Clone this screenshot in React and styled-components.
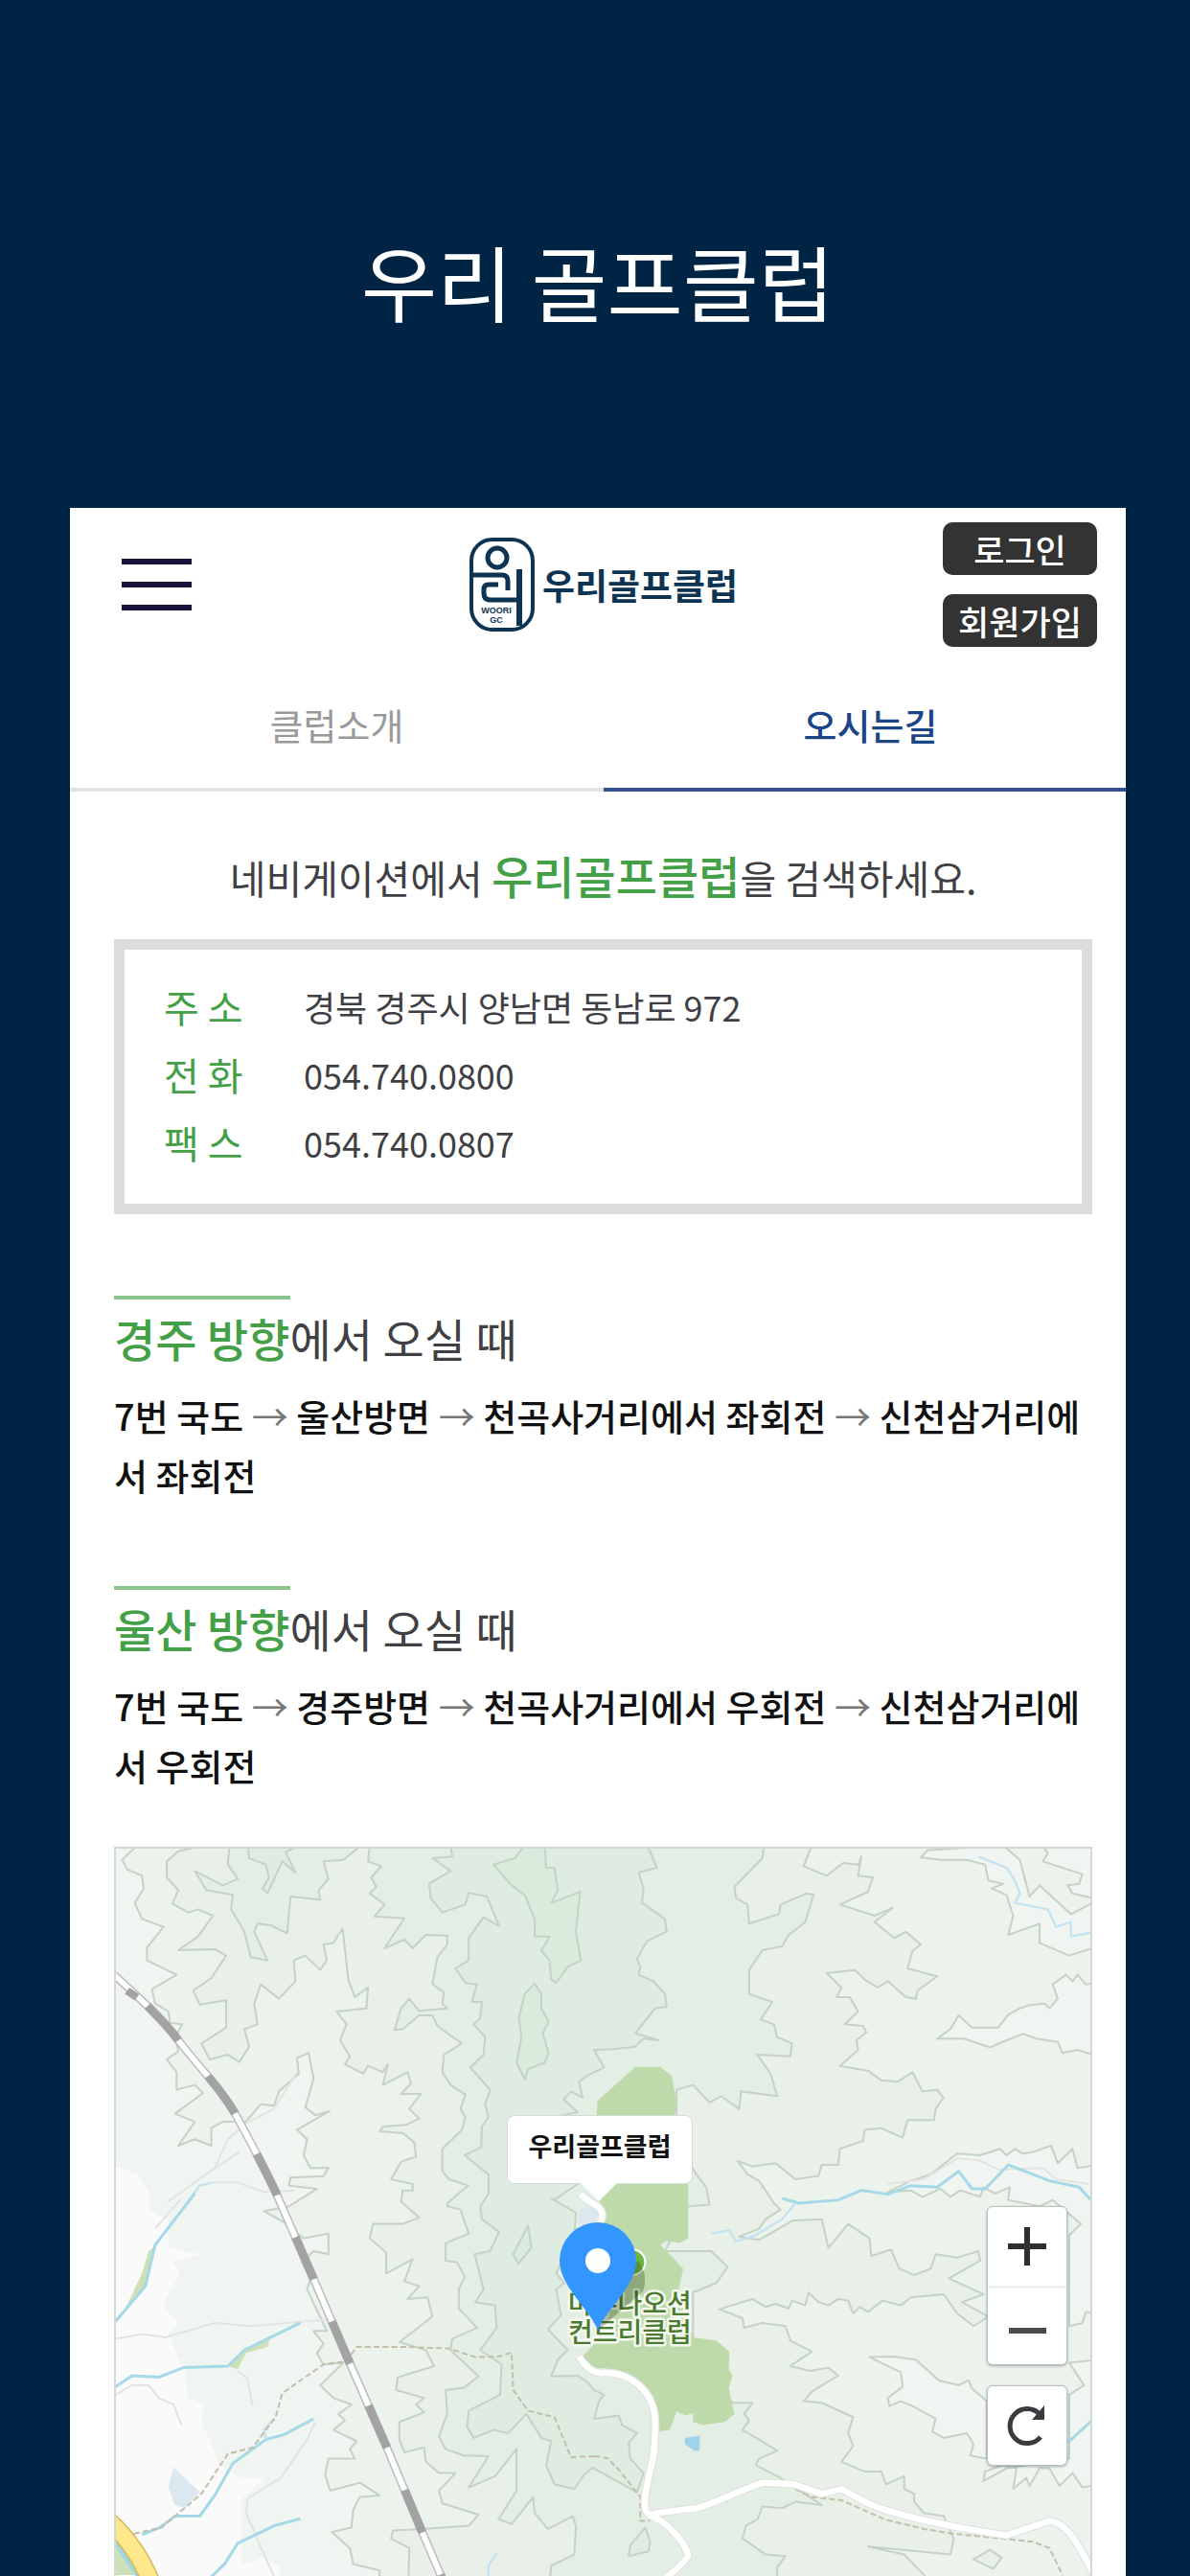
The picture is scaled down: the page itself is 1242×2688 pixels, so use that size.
import React from "react";
import styled, { createGlobalStyle, css } from "styled-components";

const color = {
  navy: "#002544",
  ink: "#3f3f44",
  green: "#43a047",
  rule: "#8bc48c",
  frame: "#dcdcdc",
  blue: "#1c4587",
};

const GlobalStyle = createGlobalStyle`
  *, *::before, *::after { box-sizing: border-box; }
  body { margin: 0; background: ${color.navy}; }
  body, button { font-family: "Noto Sans CJK KR", "Noto Sans", sans-serif; }
  h1, h2, p, dl, dd { margin: 0; }
`;

const Page = styled.div`
  min-height: 100vh;
  display: flex;
  flex-direction: column;
  padding: 0 67px 0 73px;
`;

const PageTitle = styled.h1`
  padding: 228px 0 172px;
  color: #fff;
  font-size: 86px;
  font-weight: 400;
  line-height: 130px;
  text-align: center;
`;

const Screen = styled.main`
  flex: 1;
  display: flex;
  overflow: hidden;
  background: #fff;
`;

/* The page inside the screen is slightly wider than its window. */
const Site = styled.div`
  flex: 0 0 calc(100% + 12px);
  display: flex;
  flex-direction: column;
`;

const Header = styled.header`
  display: grid;
  grid-template-columns: 1fr auto 1fr;
  padding: 15px 42px 0;
`;

const MenuButton = styled.button`
  justify-self: start;
  align-self: center;
  display: flex;
  flex-direction: column;
  gap: 18px;
  margin: 0 12px;
  padding: 0;
  border: 0;
  background: none;
`;

const MenuBar = styled.span`
  width: 73px;
  height: 6px;
  background: #1b1440;
`;

const Logo = styled.a`
  align-self: center;
  display: flex;
  align-items: center;
  gap: 8px;
  color: #0d3453;
  font-size: 37px;
  font-weight: 700;
  line-height: 48px;
  text-decoration: none;
`;

const Account = styled.div`
  justify-self: end;
  display: flex;
  flex-direction: column;
  gap: 20px;
`;

const AccountButton = styled.button`
  width: 161px;
  height: 55px;
  padding: 0;
  border: 0;
  border-radius: 10px;
  background: #333;
  color: #fff;
  font-size: 35px;
  font-weight: 500;
  line-height: 55px;
`;

const Tabs = styled.nav`
  display: flex;
  padding-top: 37px;
`;

const Tab = styled.a`
  flex: 1;
  padding: 16px 0 38px;
  border-bottom: 4px solid #e2e2e2;
  color: #999;
  font-size: 38px;
  line-height: 56px;
  text-align: center;
  text-decoration: none;
  ${(p) =>
    p.$active &&
    css`
      border-color: #33518f;
      color: ${color.blue};
      font-weight: 500;
    `}
`;

const Body = styled.div`
  flex: 1;
  display: flex;
  flex-direction: column;
  padding: 0 47px 0 46px;
`;

const SearchHint = styled.p`
  padding: 52px 0 30px;
  color: ${color.ink};
  font-size: 41px;
  line-height: 70px;
  text-align: center;
  white-space: nowrap;
`;

const Club = styled.strong`
  color: ${color.green};
  font-size: 47px;
  font-weight: 500;
`;

const Contact = styled.dl`
  display: grid;
  grid-template-columns: 146px 1fr;
  padding: 24px 41px 28px;
  border: 11px solid ${color.frame};
  color: ${color.ink};
  font-size: 36px;
  line-height: 71px;
`;

const Label = styled.dt`
  color: ${color.green};
  font-size: 40px;
`;

const Route = styled.section`
  padding-top: 85px;
`;

const RouteTitle = styled.h2`
  margin-bottom: 10px;
  color: ${color.ink};
  font-size: 47px;
  font-weight: 400;
  line-height: 76px;
`;

const Direction = styled.strong`
  display: inline-block;
  border-top: 4px solid ${color.rule};
  color: ${color.green};
  font-weight: 500;
  line-height: 80px;
`;

const RouteText = styled.p`
  color: #111;
  font-size: 38px;
  font-weight: 500;
  line-height: 62px;
  word-break: break-all;
`;

const Step = styled.span``;

const Arrow = styled.span`
  color: #777;
  font-weight: 400;
`;

const MapPanel = styled.div`
  position: relative;
  flex: 1;
  min-height: 760px;
  margin-top: 54px;
  overflow: hidden;
  border: 2px solid #d2d8d3;
  border-bottom: 0;
`;

const Terrain = styled.svg`
  position: absolute;
  inset: 0;
  width: 100%;
  height: 100%;
`;

const Callout = styled.div`
  position: absolute;
  top: 278px;
  left: 408px;
  width: 194px;
  height: 72px;
  border: 1px solid #d5dcd5;
  border-radius: 8px;
  background: #fff;
  color: #111;
  font-size: 27px;
  font-weight: 700;
  line-height: 62px;
  text-align: center;
  &::after {
    content: "";
    position: absolute;
    top: 70px;
    left: 76px;
    border: 19px solid transparent;
    border-top-color: #fff;
    border-bottom: 0;
  }
`;

const Controls = styled.div`
  position: absolute;
  top: 373px;
  right: 24px;
  display: flex;
  flex-direction: column;
  gap: 21px;
`;

const ControlGroup = styled.div`
  display: flex;
  flex-direction: column;
  border: 1px solid #b9bfba;
  border-radius: 6px;
  background: #fff;
  box-shadow: 0 1px 3px rgba(0, 0, 0, 0.3);
`;

const ControlButton = styled.button`
  width: 82px;
  height: 82px;
  padding: 0;
  border: 0;
  background: none;
  & + & {
    border-top: 3px solid #f0f0f0;
  }
  svg {
    display: block;
    margin: 0 auto;
  }
`;

/* Terrain is surveyed in four sheets of 1510 x 1170 units. */
const sheet = (col, row, points) =>
  points
    .trim()
    .split(/\s+/)
    .map((p) => {
      const [x, y] = p.split(",").map(Number);
      return `${x + col * 1510},${y + row * 1170}`;
    })
    .join(" ");

const nw = (p) => sheet(0, 0, p);
const ne = (p) => sheet(1, 0, p);
const sw = (p) => sheet(0, 1, p);
const se = (p) => sheet(1, 1, p);

const levels = [
  {
    fill: "#ebf3ec",
    points: [
      nw("125,80 80,125 95,155 140,175 145,215 118,260 140,310 205,335 155,400 155,440 245,485 170,530 180,575 220,600 225,635 262,640 240,680 250,725 215,750 245,790 245,845 300,830 325,855 240,920 300,945 250,1020 300,1000 350,1020 350,965 385,945 455,945 500,890 540,895 555,850 615,795 610,745 645,730 660,810 635,900 665,925 708,912 610,970 640,1000 630,1050 650,1090 705,1090 690,1115 590,1120 585,1145 670,1155"),
      sw("585,40 510,55 570,90 630,140 705,125 705,190 660,180 625,215 660,240 640,300 700,430 660,430 690,470 670,500 690,535 750,530 680,600 720,640 775,660 735,690 755,710 720,740 790,775 770,800 785,830 705,830 695,880 710,930 800,905 860,945 800,950 780,990 775,1045 715,1060 770,1110 780,1160 860,1180 860,1400"),
      se("1600,1400"),
      ne("1600,80"),
    ],
  },
  {
    fill: "#f0f5f1",
    points: [ne("990,118 1010,95 1240,80 1290,125 1320,240 1350,205 1445,295 1530,250 1530,395 1440,425 1350,385 1350,325 1255,360 1270,300 1250,235 1205,215 1240,200 1195,190 1185,140 1130,125 1055,125")],
  },
  {
    fill: "#f0f5f1",
    points: [ne("1360,80 1375,105 1360,130 1480,170 1470,200 1435,205 1450,230 1530,250 1530,80")],
  },
  {
    fill: "#f0f5f1",
    points: [ne("1040,685 1080,655 1105,612 1145,650 1225,650 1255,610 1290,590 1320,580 1365,575 1380,590 1405,560 1390,515 1430,485 1450,505 1465,485 1490,515 1530,510 1530,735 1495,730 1465,720 1420,730 1405,695 1340,685 1300,670 1250,690 1200,712 1120,685")],
  },
  {
    fill: "#f0f5f1",
    points: [
      ne("890,1165 960,1130 1020,1110 1100,1045 1170,1050 1230,1030 1250,1050 1275,1030 1300,1045 1330,1040 1385,1020 1405,1075 1450,1030 1465,1090 1530,1080"),
      se("1530,380 1490,370 1480,405 1440,415 1440,130 1475,95 1390,20 1350,40 1255,20 1260,-20 1215,0 1180,-20 1170,10 1110,-10 1080,10 1050,-15 995,10 960,-10"),
    ],
  },
  {
    fill: "#f0f5f1",
    points: [se("835,512 905,510 975,520 1045,585 1105,600 1135,585 1145,610 1190,650 1190,830 1140,820 1150,785 1130,750 1060,765 1025,745 1035,705 965,665 930,650 895,665 890,640 935,605 930,560")],
  },
  {
    fill: "#f0f5f1",
    points: [se("1440,530 1485,600 1440,630 1440,830 1250,860 1180,900 1185,870 1240,850 1280,860 1270,925 1310,890 1320,915 1350,860 1380,860 1410,915 1450,875 1480,920 1530,910 1530,520")],
  },
  {
    fill: "#e8f0e8",
    points: [
      nw("330,80 250,98 215,130 215,180 250,220 232,262 280,290 310,280 355,300 310,365 250,408 360,405 395,425 350,495 295,535 315,578 395,565 395,650 320,700 345,750 400,735 435,758 465,710 450,655 490,640 480,575 500,515 555,560 605,505 600,440 635,425 680,470 700,440 690,390 720,385 748,340 765,500 785,555 825,525 820,590 730,600 760,640 740,690 770,740 755,765 810,795 825,770 870,790 885,765 870,830 945,790 955,825 925,858 985,858 950,905 980,935 940,955 870,960 860,975 930,980 965,1010 970,1055 925,1070 895,1125 960,1140 960,1160 930,1160 925,1195"),
      sw("980,75 930,95 840,95 830,140 880,185 880,250 960,205 935,275 980,290 945,330 1005,325 1020,385 920,465 1000,490 1025,540 915,575 910,615 995,640 970,660 995,685 920,715 920,770 935,810 995,795 1000,840 1040,875 1090,875 1040,930 1050,970 1160,1005 1130,1040 990,1050 900,1055 895,1080 950,1110 945,1300"),
      se("1000,1300 1000,1194 940,1130 830,1105 1080,1130 1090,1080 1060,1010 1000,1000 970,965 970,940 940,925 940,885 885,910 870,870 820,870 750,840 785,790 770,750 785,700 690,655 635,650 660,620 740,570 710,545 655,555 595,540 660,495 595,460 580,415 510,405 455,420 450,390 380,362 480,330 520,355 550,345 590,360 600,335 640,350 650,310 680,340 710,350 740,330 770,335 785,375 805,355 830,370 875,335 930,350 960,325 1060,315 1100,375 1150,415 1195,385 1115,340 1180,315 1075,265 1170,210 1165,180 1100,200 1035,190 1020,235 970,255 925,235 900,175 840,195 835,140 770,95 710,170 690,80 600,85 500,145 440,135 500,110 520,80 565,50"),
      ne("545,1200 500,1130 465,1110 435,1068 480,1085 550,1075 610,1125 680,1115 690,1080 740,1080 745,1030 815,1005 820,970 870,965 935,995 950,940 1030,940 1035,905 1058,870 1040,845 995,850 965,790 920,820 870,815 830,785 745,770 800,720 795,690 825,665 815,645 760,640 800,600 775,555 735,555 750,525 705,480 790,470 820,500 860,525 890,505 945,555 975,560 980,535 1040,490 950,465 965,410 990,390 945,350 910,370 850,320 905,275 850,300 745,265 830,225 845,180 800,175 810,115 800,140 755,135 705,175 635,145 660,80"),
    ],
  },
  {
    fill: "#e3eee5",
    points: [nw("405,80 400,140 430,185 385,205 300,160 335,220 415,235 410,280 450,350 470,430 520,440 480,350 490,325 530,330 580,355 590,240 680,250 675,220 705,185 690,130 750,125 805,80")],
  },
  {
    fill: "#deece1",
    points: [nw("460,80 465,120 515,140 525,180 505,215 520,230 565,130 605,165 575,100 620,80")],
  },
  {
    fill: "#e3eee5",
    points: [
      nw("830,80 825,130 865,145 835,180 850,210 830,230 875,265 845,302 935,308 875,402 935,375 960,402 1000,360 1065,362 1065,390 1035,430 1020,515 1055,540 1050,575 1065,590 980,598 950,560 925,590 905,658 930,655 980,612 1020,612 1035,645 1108,700 1055,735 1050,790 1075,830 1120,860 1105,905 1120,930 1110,970 1050,1030 1050,1100 1070,1125 1128,1145 1065,1200"),
      sw("1065,40 1105,50 1130,125 1060,155 1060,210 1095,215 1118,260 1100,300 1100,360 1155,420 1080,455 1075,490 1160,572 1115,608 1060,615 1065,690 1040,760 1060,800 1115,820 1190,822 1130,920 1210,885 1275,800 1275,930 1220,1020 1260,1035 1325,950 1330,1000 1370,1050 1445,1010 1455,1040 1450,1130 1380,1165 1370,1300"),
      se("555,1300 555,1170 580,1135 520,1130 450,1080 460,1040 495,1020 510,980 570,985 610,965 690,975 565,890 490,850 500,830 555,805 500,770 450,740 470,710 455,690 480,655 420,655 300,460 300,310 370,280 405,230 355,180 215,180 285,40 350,35"),
      ne("340,1150 310,1110 250,1000 250,845 300,830 350,885 385,865 440,905 445,850 555,865 535,795 495,735 595,740 600,700 555,680 545,640 505,625 540,570 470,545 470,470 510,408 570,395 590,360 640,320 665,235 645,230 565,265 560,295 470,325 465,265 430,245 425,210 510,120 515,80"),
    ],
  },
  {
    fill: "#deece1",
    points: [
      nw("1075,80 1080,115 1020,120 1075,160 1010,200 1015,245 1050,290 1120,265 1130,228 1185,240 1222,332 1175,305 1130,370 1130,440 1090,465 1120,510 1155,515 1140,570 1170,570 1165,620 1145,640 1180,680 1175,735 1135,775 1195,845 1180,890 1190,930 1170,960 1168,1025 1118,1050 1190,1110 1190,1170"),
      sw("1165,40 1170,80 1222,120 1195,180 1148,190 1175,300 1150,340 1210,350 1215,420 1165,490 1230,535 1225,630 1130,680 1125,730 1145,765 1205,740 1250,750 1305,690 1350,765 1380,775 1365,850 1390,910 1450,925 1480,880 1505,858"),
      se("130,935 150,875 110,830 105,780 130,750 85,725 75,695 0,705 15,650 30,630 0,615"),
      sw("1490,590 1460,570 1380,572 1400,520 1430,490 1370,425 1410,380 1395,300 1420,280 1395,250 1450,130 1455,60 1380,15"),
      nw("1390,1190 1460,1140 1300,950 1460,915 1418,875 1440,850 1475,870 1465,820 1490,800 1540,775 1510,720"),
      ne("60,718 125,710 150,685 195,690 125,668 185,590 220,585 215,545 180,505 135,485 140,460 130,435 160,380 220,350 215,310 145,260 150,215 135,165 190,150 165,88 165,80"),
    ],
  },
  {
    fill: "#d9ebdc",
    points: [nw("1300,80 1270,120 1205,140 1260,205 1300,235 1330,310 1330,365 1375,365 1350,410 1375,440 1380,500 1395,510 1430,460 1470,440 1455,350 1468,225 1380,260 1400,220 1390,150 1365,150 1360,80")],
  },
  {
    fill: "#d9ebdc",
    points: [nw("1330,512 1300,545 1282,620 1290,680 1275,760 1300,812 1310,780 1360,760 1372,730 1355,670 1372,630 1350,590 1350,545")],
  },
  { fill: "#d9ebdc", points: [sw("1310,100 1265,190 1280,220 1320,170")] },
  { fill: "#deece1", points: [se("155,1045 110,1100 105,1135 165,1120 170,1090")] },
  { fill: "#e8f0e8", points: [se("1200,1115 1150,1145 1210,1175 1235,1140")] },
];

const rail =
  "M55 485 C120 545 200 620 250 690 S380 840 425 925 S520 1110 545 1165 L655 1425 L765 1690 L880 1960 L985 2220 L1060 2400";

const streams = [
  { at: [0, 0], d: "M355 1135 L315 1145 L275 1200" },
  { at: [0, 1], d: "M300 0 L180 160 L150 290 L60 400", w: 9 },
  { at: [0, 1], d: "M60 605 L110 570 L190 575 L265 545 L400 540 L450 490 L620 405", w: 9 },
  { at: [0, 1], d: "M660 705 L570 755 L515 770 L415 845 L360 945 L315 1010 L240 1010 L195 1045 L140 1068", w: 9 },
  { at: [0, 1], d: "M540 705 L510 740 L515 770" },
  { at: [0, 1], d: "M620 1018 L540 1040 L430 1095 L390 1160 L350 1200", w: 9 },
  { at: [0, 1], d: "M1215 1125 L1190 1165 L1190 1200" },
  { at: [1, 0], d: "M1165 115 L1250 150 L1275 190 L1290 230 L1275 260 L1375 280 L1400 335 L1445 320 L1445 365 L1520 350" },
  { at: [1, 0], d: "M570 1185 L620 1200 L740 1190 L810 1160 L890 1172 L960 1145 L1040 1150 L1105 1100 L1145 1155 L1185 1155 L1255 1080 L1380 1130 L1470 1150 L1510 1195", w: 9 },
  { at: [1, 1], d: "M610 30 L570 80 L490 130 L430 150 L410 115 L355 125" },
  { at: [1, 1], d: "M1435 780 L1520 700", w: 9 },
];

const paths = [
  { at: [0, 0], d: "M610 790 L540 905 L455 950 L400 1000 L360 1090 L220 1195 M435 1040 L320 1120 M355 1135 L430 1135 L510 1165 L600 1160" },
  { at: [0, 1], d: "M260 15 L180 110 M60 455 L140 440 L210 450 L360 405 L470 415 L580 405 L700 395 M60 630 L110 600 L160 600 L190 640 L235 660 L260 725 M430 555 L460 580 L475 665 M665 715 L640 770 L560 890 L460 955 L455 1000 L540 1200" },
  { at: [1, 0], d: "M890 1140 L1000 1125 L1100 1060 L1165 1065 L1225 1095 L1360 1090 L1400 1125 L1500 1140" },
];

const trails = [
  { at: [0, 1], d: "M115 1065 L200 1045 L320 940 L400 815 L475 795 L545 700 L565 625 L690 535 L760 525 L790 480 L940 480 L1070 485 L1150 512 L1220 510 L1260 498 L1265 615 L1310 680 L1390 700 L1440 825 L1510 822" },
  { at: [1, 1], d: "M0 822 L40 828 L80 870 L140 950 L140 1025 L170 1025" },
  { at: [1, 1], d: "M610 925 L660 950 L750 960 L880 1020 L1000 1050 L1090 1065 L1330 1090 L1380 1110 L1420 1195" },
];

const roads = [
  "M1470 1170 C1480 1195 1530 1200 1535 1235 C1535 1270 1500 1290 1490 1310",
  "M1465 1680 C1480 1710 1505 1730 1530 1732 C1600 1725 1640 1760 1665 1790 C1700 1840 1700 1880 1690 1990 C1670 2090 1650 2150 1675 2175",
  "M1675 2175 C1740 2200 1790 2270 1795 2305 Q1770 2340 1730 2370",
  "M1675 2175 C1720 2165 1780 2160 1820 2155 C1890 2135 1990 2080 2025 2075 L2115 2080 L2200 2110 L2260 2095 L2340 2140 C2430 2180 2600 2215 2760 2240 L2890 2195 C2950 2200 2980 2280 3030 2370",
];

const golf = `${ne("5,960 10,880 125,773 200,773 235,800 250,885 240,960 285,1130")} ${se(
  "285,140 260,155 220,148 200,160 270,235 255,310 300,450 370,460 410,495 408,550 420,570 408,610 425,690 395,715 330,725 300,715 300,688 275,695 250,682 230,740 195,745 180,650 120,575 60,550 0,545 -35,510 0,470 60,300 20,130 25,40 5,10"
)}`;

const shift = ([col, row]) => `translate(${col * 1510} ${row * 1170})`;

function TerrainMap() {
  return (
    <Terrain aria-hidden="true">
      <g transform="translate(-21 -30) scale(0.3444 0.3333)" fill="none" strokeLinejoin="round">
        <rect width="6000" height="6000" fill="#f0f5f1" />
        <polygon
          fill="#fafafa"
          points={`${nw("0,1060 90,1095 130,1110 165,1170")} ${sw(
            "160,50 220,80 220,170 320,190 235,215 255,250 210,330 205,360 250,400 220,440 270,560 280,640 330,660 320,710 375,850 440,890 510,890 440,960 440,1165 500,1140 560,1165 540,1300 0,1300"
          )}`}
        />
        {levels.map((l, i) => (
          <polygon key={i} points={l.points.join(" ")} fill={l.fill} stroke="#c5d3c6" strokeWidth="6" />
        ))}
        <g fill="#cde0b8">
          <path transform="translate(0 1170)" d="M180 165 L150 290 L85 370 L140 250 L160 180Z M400 540 L450 490 L530 445 L520 480 L455 500 L430 550Z M60 1090 L120 1194 L60 1194Z" />
        </g>
        {paths.map((p, i) => (
          <path key={i} d={p.d} transform={shift(p.at)} stroke="#e3e3e2" strokeWidth="6" />
        ))}
        {streams.map((p, i) => (
          <path key={i} d={p.d} transform={shift(p.at)} stroke={p.w ? "#a5d9e8" : "#c3e3f0"} strokeWidth={p.w || 7} />
        ))}
        <polygon points={sw("235,855 315,935 270,985 240,975 220,920")} fill="#dce8f0" />
        <polygon points={sw("1465,55 1500,35 1525,60 1500,110 1460,90")} fill="#dce8f0" />
        <polygon points={golf} fill="#bfdaaa" />
        <polygon points={se("275,765 320,758 320,805 305,806 275,785")} fill="#9fd3ec" />
        {trails.map((p, i) => (
          <path key={i} d={p.d} transform={shift(p.at)} stroke="#c3bfa9" strokeWidth="6" strokeDasharray="18 9" />
        ))}
        {roads.map((d) => (
          <path key={d} d={d} stroke="#dfe4df" strokeWidth="26" />
        ))}
        {roads.map((d) => (
          <path key={d} d={d} stroke="#ffffff" strokeWidth="19" />
        ))}
        <path d={rail} stroke="#bdbdbd" strokeWidth="26" />
        <path d={rail} stroke="#ffffff" strokeWidth="17" />
        <path d={rail} stroke="#a3a3a3" strokeWidth="26" strokeDasharray="143 143" strokeDashoffset="-141" />
        <path d="M95 535 L125 556" stroke="#a3a3a3" strokeWidth="24" />
        <path d="M50 2245 Q90 2310 130 2370" stroke="#9fd7e4" strokeWidth="14" />
        <path d="M40 2195 Q120 2270 165 2380" stroke="#d3bd62" strokeWidth="58" />
        <path d="M40 2195 Q120 2270 165 2380" stroke="#ffe78c" strokeWidth="48" />
        <circle cx="1625" cy="1385" r="40" fill="#6fb544" stroke="#fff" strokeWidth="6" />
      </g>
      <g
        fill="#4b7a30"
        stroke="#f4f9ef"
        strokeWidth="5"
        strokeLinejoin="round"
        fontSize="28"
        fontWeight="500"
        style={{ paintOrder: "stroke" }}
      >
        <text x="472" y="485">마우나오션</text>
        <text x="472" y="515">컨트리클럽</text>
      </g>
      <path d="M503 503 L550 462 Q556 445 545 430 L520 450Z" fill="#1d3b10" opacity="0.3" />
      <path
        d="M503 503 C496 482 463 457 463 430 A40 40 0 0 1 543 430 C543 457 510 482 503 503Z"
        fill="#3396ff"
      />
      <circle cx="503" cy="430" r="13" fill="#fff" />
    </Terrain>
  );
}

function LogoMark() {
  return (
    <svg width="68" height="98" viewBox="0 0 68 98" fill="none" stroke="#0d3453" aria-hidden="true">
      <rect x="2" y="2" width="64" height="94" rx="22" strokeWidth="4" />
      <circle cx="29" cy="21" r="10" strokeWidth="5" />
      <path d="M3 39 H34 Q40 39 40 45 V55" strokeWidth="5" />
      <path d="M30 49 H20 Q15 49 15 54 V58 Q15 65 22 65 H52" strokeWidth="5" />
      <path d="M52 33 V92" strokeWidth="6" />
      <g fill="#0d3453" stroke="none" fontSize="9" textAnchor="middle" fontFamily="Liberation Sans, sans-serif">
        <text x="28" y="79">WOORI</text>
        <text x="28" y="89">GC</text>
      </g>
    </svg>
  );
}

const contacts = [
  ["주 소", "경북 경주시 양남면 동남로 972"],
  ["전 화", "054.740.0800"],
  ["팩 스", "054.740.0807"],
];

const routes = [
  {
    from: "경주 방향",
    steps: [["7번 국도"], ["울산방면"], ["천곡사거리에서 좌회전"], ["신천삼거리에", "서 좌회전"]],
  },
  {
    from: "울산 방향",
    steps: [["7번 국도"], ["경주방면"], ["천곡사거리에서 우회전"], ["신천삼거리에", "서 우회전"]],
  },
];

export default function App() {
  return (
    <Page>
      <GlobalStyle />
      <PageTitle>우리 골프클럽</PageTitle>
      <Screen>
        <Site>
          <Header>
            <MenuButton type="button" aria-label="메뉴">
              <MenuBar />
              <MenuBar />
              <MenuBar />
            </MenuButton>
            <Logo href="#">
              <LogoMark />
              우리골프클럽
            </Logo>
            <Account>
              <AccountButton type="button">로그인</AccountButton>
              <AccountButton type="button">회원가입</AccountButton>
            </Account>
          </Header>
          <Tabs>
            <Tab href="#intro">클럽소개</Tab>
            <Tab href="#directions" $active aria-current="page">
              오시는길
            </Tab>
          </Tabs>
          <Body>
            <SearchHint>
              네비게이션에서 <Club>우리골프클럽</Club>을 검색하세요.
            </SearchHint>
            <Contact>
              {contacts.map(([label, value]) => (
                <React.Fragment key={label}>
                  <Label>{label}</Label>
                  <dd>{value}</dd>
                </React.Fragment>
              ))}
            </Contact>
            {routes.map((r) => (
              <Route key={r.from}>
                <RouteTitle>
                  <Direction>{r.from}</Direction>에서 오실 때
                </RouteTitle>
                <RouteText>
                  {r.steps.map((parts, n) => (
                    <React.Fragment key={n}>
                      {n > 0 && (
                        <>
                          {" "}
                          <Arrow>→</Arrow>{" "}
                        </>
                      )}
                      {parts.map((part) => (
                        <Step key={part}>{part}</Step>
                      ))}
                    </React.Fragment>
                  ))}
                </RouteText>
              </Route>
            ))}
            <MapPanel>
              <TerrainMap />
              <Callout>우리골프클럽</Callout>
              <Controls>
                <ControlGroup>
                  <ControlButton type="button" aria-label="확대">
                    <svg width="42" height="42" viewBox="0 0 42 42" stroke="#2e2f33" strokeWidth="6">
                      <path d="M1 21 H41 M21 1 V41" />
                    </svg>
                  </ControlButton>
                  <ControlButton type="button" aria-label="축소">
                    <svg width="42" height="42" viewBox="0 0 42 42" stroke="#4a4b50" strokeWidth="6">
                      <path d="M2 25 H41" />
                    </svg>
                  </ControlButton>
                </ControlGroup>
                <ControlGroup>
                  <ControlButton type="button" aria-label="새로고침">
                    <svg width="42" height="44" viewBox="0 0 42 44" fill="none" stroke="#3a3b3f" strokeWidth="5">
                      <path d="M35 34 A18 18 0 1 1 34 10" />
                      <path d="M39 1 V16 H26Z" fill="#3a3b3f" stroke="none" />
                    </svg>
                  </ControlButton>
                </ControlGroup>
              </Controls>
            </MapPanel>
          </Body>
        </Site>
      </Screen>
    </Page>
  );
}
